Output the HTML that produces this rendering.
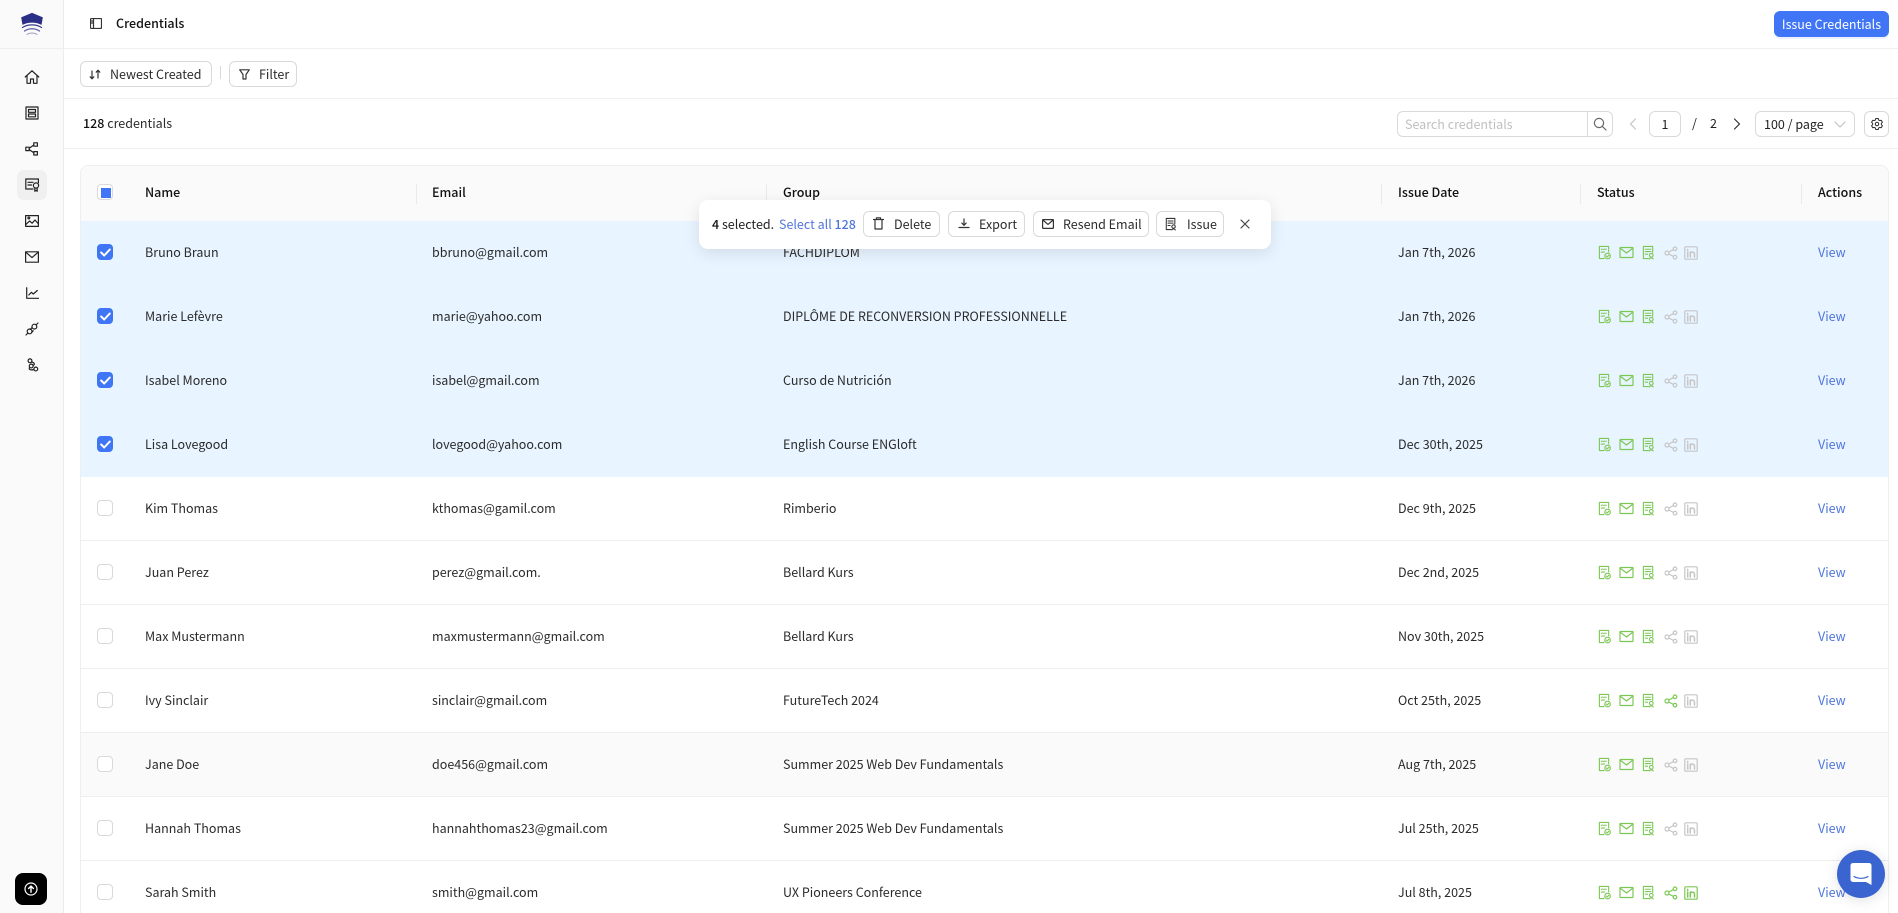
<!DOCTYPE html>
<html><head><meta charset="utf-8"><title>Credentials</title>
<style>
*{box-sizing:border-box}
html,body{margin:0;padding:0;width:1898px;height:913px;overflow:hidden;background:#fff}
body{position:relative;font-family:"Noto Sans CJK SC","Liberation Sans",sans-serif;font-size:12.5px;color:#1f1f1f}
.a{position:absolute}
svg{position:absolute;fill:none;stroke:currentColor;stroke-width:1.2;stroke-linecap:round;stroke-linejoin:round}
.side{left:0;top:0;width:64px;height:913px;background:#fafafa;border-right:1px solid #ececec}
.line{left:0;height:1px;background:#efefef}
.btn{position:absolute;height:26px;border:1px solid #d9d9d9;border-radius:6px;background:#fff;line-height:23px;color:#2b2b2b;white-space:nowrap}
.btn span{position:absolute;top:0}
.card{left:80px;top:165px;width:1809px;height:760px;border:1px solid #efefef;border-radius:8px 8px 0 0;overflow:hidden}
.hd{left:0;top:0;width:1807px;height:55px;background:#fafafa}
.hd b{position:absolute;top:0;line-height:52px;font-weight:500;color:#111}
.hd i{position:absolute;top:18px;width:1px;height:20px;background:#eaeaea}
.row{position:absolute;left:0;width:1807px;height:64px;border-bottom:1px solid #eeeeee;line-height:61px;background:#fff}
.row.s{background:#e8f4ff;border-bottom:0}
.row span{position:absolute;top:0;white-space:nowrap;color:#2b2b2b}
.n{left:64px}.e{left:351px}.g{left:702px}.d{left:1317px}
.row .v{left:1737px;color:#4f75dd}
.cb{position:absolute;left:16px;top:23px;width:16px;height:16px;border:1px solid #d9d9d9;border-radius:4px;background:#fff}
.s .cb{background:#4076f6;border-color:#4076f6}
.st{position:absolute;left:1515px;top:19px;width:110px;height:22px;color:#7dc855}
.g0{color:#c6c6c6}
</style></head><body>
<svg width="0" height="0" style="position:absolute">
<defs>
<symbol id="cert" viewBox="0 0 14 16"><path d="M11.5 7.5V1.500H1.500V14.500H6.500M3.500 4.500H9M3.500 7.500H7"/><circle cx="10.300" cy="11.800" r="3"/><path d="M9 11.800l1 1 1.600-1.700"/></symbol>
<symbol id="mail" viewBox="0 0 15 13"><rect x="1" y="1.500" width="13" height="10" rx=".5"/><path d="M1 2l6.500 5L14 2"/></symbol>
<symbol id="issue" viewBox="0 0 14 16"><path d="M11.500 8V1.500H1.500V14.500H7M3.500 4.500H9.500M3.500 7H9.500M3.500 9.800H6"/><circle cx="10" cy="11" r="2"/><path d="M8 15c.3-1.600 3.700-1.600 4 0"/></symbol>
<symbol id="share" viewBox="0 0 14 14"><circle cx="3" cy="7" r="2"/><circle cx="11" cy="2.800" r="1.800"/><circle cx="11" cy="11.200" r="1.800"/><path d="M4.800 6l4.600-2.400M4.800 8l4.600 2.400"/></symbol>
<symbol id="in" viewBox="0 0 14 14"><rect x=".8" y=".8" width="12.400" height="12.400" rx="1"/><path d="M3.700 6v5M3.700 3.400v.8M6.300 11V6M6.300 8.200c0-2.800 4.200-2.800 4.200 0V11" stroke-width="1.500"/></symbol>
<symbol id="s0" viewBox="0 0 110 22"><use href="#cert" x="2" y="5" width="13" height="15"/><use href="#mail" x="23" y="6" width="15" height="13"/><use href="#issue" x="46" y="5" width="13" height="15"/><g class="g0"><use href="#share" x="68" y="6" width="14" height="14"/><use href="#in" x="88" y="6" width="14" height="14"/></g></symbol>
<symbol id="s1" viewBox="0 0 110 22"><use href="#cert" x="2" y="5" width="13" height="15"/><use href="#mail" x="23" y="6" width="15" height="13"/><use href="#issue" x="46" y="5" width="13" height="15"/><use href="#share" x="68" y="6" width="14" height="14"/><g class="g0"><use href="#in" x="88" y="6" width="14" height="14"/></g></symbol>
<symbol id="s2" viewBox="0 0 110 22"><use href="#cert" x="2" y="5" width="13" height="15"/><use href="#mail" x="23" y="6" width="15" height="13"/><use href="#issue" x="46" y="5" width="13" height="15"/><use href="#share" x="68" y="6" width="14" height="14"/><use href="#in" x="88" y="6" width="14" height="14"/></symbol>
<symbol id="chk" viewBox="0 0 11 9"><path d="M1.200 4.500l3 3L9.800 1.500" stroke-width="2"/></symbol>
</defs></svg>

<div class="a side"></div>
<div class="a line" style="left:0;top:48px;width:1898px"></div>
<div class="a" style="left:63px;top:48px;width:1px;height:865px;background:#ececec"></div>
<div class="a line" style="left:64px;top:98px;width:1834px"></div>
<div class="a line" style="left:64px;top:148px;width:1834px"></div>

<!-- logo -->
<svg class="a" style="left:20px;top:12px" width="24" height="24" viewBox="0 0 24 24"><path d="M1.500 5.500L12 1.200l10.500 4.300-1.200 7C16 9.600 8 9.600 2.700 12.500z" fill="#2b2f85" stroke="#2b2f85" stroke-width=".6"/><path d="M2.500 15.500C8 12 16 12 21.500 15.500" stroke="#3a3f8f" stroke-width="1.200"/><path d="M4.500 19C9 16 15 16 19.500 19" stroke="#5a5fa3" stroke-width="1.200"/><path d="M7 22.300C10 20.500 14 20.500 17 22.300" stroke="#9aa0c4" stroke-width="1"/></svg>

<!-- sidebar icons -->
<div class="a" style="left:17px;top:170px;width:30px;height:30px;border-radius:7px;background:#f0f0f0"></div>
<svg style="left:24px;top:69px;color:#222" width="16" height="16" viewBox="0 0 16 16"><path d="M1.200 8L8 1.800 14.800 8M3 6.800V14.300H6.500V10H9.500V14.300H13V6.800"/></svg>
<svg style="left:25px;top:106px;color:#222" width="14" height="14" viewBox="0 0 14 14"><path d="M1 1H13V13H1zM3.500 3.500H10.500V6.300H3.500zM3.500 8H10.500V10.800H3.500z"/></svg>
<svg style="left:25px;top:142px;color:#222" width="14" height="14" viewBox="0 0 14 14"><rect x=".8" y="5.200" width="3.400" height="3.400"/><rect x="8.800" y=".8" width="3.600" height="3.400"/><rect x="8.800" y="9.600" width="3.600" height="3.400"/><path d="M4.200 6.200L8.800 3M4.200 7.600L8.800 10.800"/></svg>
<svg style="left:25px;top:178px;color:#222" width="15" height="14" viewBox="0 0 15 14"><path d="M8 11H.8V1H13.400V4.800M3 4.300H8M3 7H6.500"/><circle cx="11" cy="7.500" r="2.600"/><path d="M9.800 10v3.200l1.200-.8 1.200.8V10"/></svg>
<svg style="left:25px;top:215px;color:#222" width="14" height="12" viewBox="0 0 14 12"><rect x=".6" y=".6" width="12.800" height="10.800"/><circle cx="3.800" cy="3" r=".9"/><path d="M.8 9.600L4.600 6l2.500 2.200L10 5l3.200 3.600"/></svg>
<svg style="left:25px;top:251px;color:#222" width="14" height="12" viewBox="0 0 14 12"><rect x=".6" y=".8" width="12.800" height="10.400"/><path d="M.8 1.200L7 6.600l6.200-5.400"/></svg>
<svg style="left:26px;top:287px;color:#222" width="13" height="12" viewBox="0 0 13 12"><path d="M.7.7V11.300H12.500M2.800 8l2.600-2.700L7.300 7l4-3.500"/></svg>
<svg style="left:25px;top:322px;color:#222" width="14" height="14" viewBox="0 0 14 14"><path d="M1 13l2-2M13 1l-2 2M5.200 7.400L6.800 5.800M8.200 8.800l-1.600 1.600"/><circle cx="4.600" cy="9.400" r="2.400"/><circle cx="9.400" cy="4.600" r="2.400"/></svg>
<svg style="left:26px;top:358px;color:#222" width="13" height="14" viewBox="0 0 13 14"><circle cx="4" cy="2.800" r="1.900"/><circle cx="5.200" cy="8" r="1.900"/><circle cx="9.800" cy="11" r="1.900"/><path d="M5.500 3.800C9 5 9 6.500 7 7.400M3.500 9.500c-1 2 1 3 4.500 2"/></svg>
<div class="a" style="left:15px;top:873px;width:32px;height:32px;border-radius:8px;background:#000"></div>
<svg style="left:24px;top:882px;color:#fff" width="14" height="14" viewBox="0 0 14 14"><circle cx="7" cy="7" r="6"/><path d="M7 10.300V4.200M4.600 6.500L7 4l2.400 2.500" stroke-width="1.400"/></svg>

<!-- header -->
<svg style="left:90px;top:18px;color:#333" width="12" height="11" viewBox="0 0 12 11"><rect x=".5" y=".5" width="11" height="10" rx="1"/><path d="M3.500 .5v10M1.500 3h1M1.500 5h1"/></svg>
<div class="a" style="left:116px;top:14px;line-height:18px;font-weight:500;color:#111">Credentials</div>
<div class="a" style="left:1774px;top:11px;width:115px;height:26px;border-radius:6px;background:#4076f6;color:#fff;line-height:25px;text-align:center;white-space:nowrap;box-shadow:0 2px 0 rgba(64,118,246,.1)">Issue Credentials</div>

<!-- toolbar -->
<div class="btn" style="left:80px;top:61px;width:132px"><span style="left:29px">Newest Created</span>
<svg style="left:8px;top:7px;color:#333" width="12" height="11" viewBox="0 0 12 11"><path d="M3 2v7.500M1.200 7.800L3 9.800l1.800-2M9 9V1.500M7.200 3.200L9 1.200l1.800 2"/></svg></div>
<div class="a" style="left:220px;top:66px;width:1px;height:13px;background:#d9d9d9"></div>
<div class="btn" style="left:229px;top:61px;width:68px"><span style="left:29px">Filter</span>
<svg style="left:9px;top:7px;color:#333" width="11" height="11" viewBox="0 0 11 11"><path d="M.7.8H10.300L7 5.500V10H4V5.500z"/></svg></div>

<div class="a" style="left:83px;top:114px;line-height:18px;white-space:nowrap;color:#2b2b2b"><span style="font-weight:500;color:#111">128</span> credentials</div>

<!-- search/pager -->
<div class="btn" style="left:1397px;top:111px;width:216px;color:#bfbfbf"><span style="left:7px">Search credentials</span><div class="a" style="left:189px;top:0;width:1px;height:24px;background:#d9d9d9"></div>
<svg style="left:195px;top:5px;color:#666" width="14" height="14" viewBox="0 0 14 14"><circle cx="6" cy="6" r="4.600"/><path d="M9.500 9.500L13 13"/></svg></div>
<svg style="left:1629px;top:118px;color:#c4c4c4" width="8" height="12" viewBox="0 0 8 12"><path d="M6.500 1L1.500 6l5 5"/></svg>
<div class="btn" style="left:1649px;top:111px;width:32px;text-align:center;color:#222">1</div>
<div class="a" style="left:1692px;top:114px;line-height:18px">/</div>
<div class="a" style="left:1710px;top:114px;line-height:18px">2</div>
<svg style="left:1733px;top:118px;color:#333" width="8" height="12" viewBox="0 0 8 12"><path d="M1.500 1l5 5-5 5"/></svg>
<div class="btn" style="left:1755px;top:111px;width:100px;color:#222"><span style="left:8px">100 / page</span>
<svg style="left:78px;top:9px;color:#c4c4c4" width="12" height="7" viewBox="0 0 12 7"><path d="M1 1l5 5 5-5"/></svg></div>
<div class="btn" style="left:1864px;top:111px;width:25px"><svg style="left:6px;top:6px;color:#333" width="12" height="12" viewBox="0 0 14 14"><path d="M5.600 1h2.800l.4 1.700 1.500.9 1.700-.5 1.300 2.400-1.200 1.200v1.600l1.200 1.200-1.300 2.400-1.700-.5-1.500.9-.4 1.700H5.600l-.4-1.700-1.500-.9-1.700.5L.7 9.500l1.200-1.200V6.700L.7 5.500 2 3.100l1.700.5 1.500-.9z" transform="translate(0 -.5)"/><circle cx="7" cy="7" r="2"/></svg></div>

<!-- table -->
<div class="a card">
<div class="a hd">
<div class="cb" style="top:18px"></div><div class="a" style="left:20px;top:22px;width:10px;height:10px;background:#4076f6"></div>
<b style="left:64px">Name</b><i style="left:335px"></i><b style="left:351px">Email</b><i style="left:685px"></i><b style="left:702px">Group</b><i style="left:1300px"></i><b style="left:1317px">Issue Date</b><i style="left:1499px"></i><b style="left:1516px">Status</b><i style="left:1720px"></i><b style="left:1737px">Actions</b>
</div>

<div class="row s" style="top:55px"><div class="cb"><svg style="left:2px;top:3px;color:#fff" width="11" height="9"><use href="#chk"/></svg></div><span class="n">Bruno Braun</span><span class="e">bbruno@gmail.com</span><span class="g">FACHDIPLOM</span><span class="d">Jan 7th, 2026</span><svg class="st" width="110" height="22"><use href="#s0"/></svg><span class="v">View</span></div>

<div class="row s" style="top:119px"><div class="cb"><svg style="left:2px;top:3px;color:#fff" width="11" height="9"><use href="#chk"/></svg></div><span class="n">Marie Lefèvre</span><span class="e">marie@yahoo.com</span><span class="g">DIPLÔME DE RECONVERSION PROFESSIONNELLE</span><span class="d">Jan 7th, 2026</span><svg class="st" width="110" height="22"><use href="#s0"/></svg><span class="v">View</span></div>

<div class="row s" style="top:183px"><div class="cb"><svg style="left:2px;top:3px;color:#fff" width="11" height="9"><use href="#chk"/></svg></div><span class="n">Isabel Moreno</span><span class="e">isabel@gmail.com</span><span class="g">Curso de Nutrición</span><span class="d">Jan 7th, 2026</span><svg class="st" width="110" height="22"><use href="#s0"/></svg><span class="v">View</span></div>

<div class="row s" style="top:247px"><div class="cb"><svg style="left:2px;top:3px;color:#fff" width="11" height="9"><use href="#chk"/></svg></div><span class="n">Lisa Lovegood</span><span class="e">lovegood@yahoo.com</span><span class="g">English Course ENGloft</span><span class="d">Dec 30th, 2025</span><svg class="st" width="110" height="22"><use href="#s0"/></svg><span class="v">View</span></div>

<div class="row" style="top:311px"><div class="cb"></div><span class="n">Kim Thomas</span><span class="e">kthomas@gamil.com</span><span class="g">Rimberio</span><span class="d">Dec 9th, 2025</span><svg class="st" width="110" height="22"><use href="#s0"/></svg><span class="v">View</span></div>

<div class="row" style="top:375px"><div class="cb"></div><span class="n">Juan Perez</span><span class="e">perez@gmail.com.</span><span class="g">Bellard Kurs</span><span class="d">Dec 2nd, 2025</span><svg class="st" width="110" height="22"><use href="#s0"/></svg><span class="v">View</span></div>

<div class="row" style="top:439px"><div class="cb"></div><span class="n">Max Mustermann</span><span class="e">maxmustermann@gmail.com</span><span class="g">Bellard Kurs</span><span class="d">Nov 30th, 2025</span><svg class="st" width="110" height="22"><use href="#s0"/></svg><span class="v">View</span></div>

<div class="row" style="top:503px"><div class="cb"></div><span class="n">Ivy Sinclair</span><span class="e">sinclair@gmail.com</span><span class="g">FutureTech 2024</span><span class="d">Oct 25th, 2025</span><svg class="st" width="110" height="22"><use href="#s1"/></svg><span class="v">View</span></div>

<div class="row" style="top:567px;background:#fafafa"><div class="cb"></div><span class="n">Jane Doe</span><span class="e">doe456@gmail.com</span><span class="g">Summer 2025 Web Dev Fundamentals</span><span class="d">Aug 7th, 2025</span><svg class="st" width="110" height="22"><use href="#s0"/></svg><span class="v">View</span></div>

<div class="row" style="top:631px"><div class="cb"></div><span class="n">Hannah Thomas</span><span class="e">hannahthomas23@gmail.com</span><span class="g">Summer 2025 Web Dev Fundamentals</span><span class="d">Jul 25th, 2025</span><svg class="st" width="110" height="22"><use href="#s0"/></svg><span class="v">View</span></div>

<div class="row" style="top:695px"><div class="cb"></div><span class="n">Sarah Smith</span><span class="e">smith@gmail.com</span><span class="g">UX Pioneers Conference</span><span class="d">Jul 8th, 2025</span><svg class="st" width="110" height="22"><use href="#s2"/></svg><span class="v">View</span></div>
</div>

<!-- bulk bar -->
<div class="a" style="left:699px;top:200px;width:572px;height:49px;background:#fff;border-radius:9px;box-shadow:0 4px 16px rgba(0,0,0,.1)">
<div class="a" style="left:13px;top:15px;line-height:18px;white-space:nowrap;color:#222"><span style="font-weight:500;color:#111">4</span> selected.</div>
<div class="a" style="left:80px;top:15px;line-height:18px;white-space:nowrap;color:#4f75dd">Select all <span style="font-weight:500">128</span></div>
<div class="btn" style="left:164px;top:11px;width:77px"><span style="left:30px">Delete</span><svg style="left:9px;top:5px;color:#333" width="11" height="13" viewBox="0 0 11 13"><path d="M.5 2.500H10.500M3.500 2.500V.8H7.500V2.500M2 2.500V12H9V2.500"/></svg></div>
<div class="btn" style="left:249px;top:11px;width:77px"><span style="left:30px">Export</span><svg style="left:9px;top:6px;color:#333" width="12" height="11" viewBox="0 0 12 11"><path d="M6 1V7M3.800 5L6 7.300 8.200 5M1 9.500H11"/></svg></div>
<div class="btn" style="left:334px;top:11px;width:116px"><span style="left:29px">Resend Email</span><svg style="left:8px;top:7px;color:#333" width="12" height="10" viewBox="0 0 12 10"><rect x=".6" y=".6" width="10.800" height="8.800" rx=".5"/><path d="M.8 1L6 5.400 11.200 1"/></svg></div>
<div class="btn" style="left:457px;top:11px;width:68px"><span style="left:30px">Issue</span><svg style="left:8px;top:5px;color:#333" width="12" height="14"><use href="#issue"/></svg></div>
<svg style="left:541px;top:19px;color:#444" width="10" height="10" viewBox="0 0 10 10"><path d="M1 1l8 8M9 1l-8 8"/></svg>
</div>

<!-- chat -->
<div class="a" style="left:1837px;top:850px;width:48px;height:48px;border-radius:50%;background:#3a64d0;box-shadow:0 2px 14px rgba(0,0,0,.12)"></div>
<svg style="left:1850px;top:862px;stroke:none" width="22" height="24" viewBox="0 0 22 24"><path d="M3 1H19a2.500 2.500 0 0 1 2.500 2.500V23l-5.500-3H3A2.500 2.500 0 0 1 .5 17.500V3.500A2.500 2.500 0 0 1 3 1z" fill="#fff"/><path d="M4 14.500c4 2.400 10 2.400 14 0" stroke="#3a64d0" stroke-width="1.200" fill="none"/></svg>
</body></html>
